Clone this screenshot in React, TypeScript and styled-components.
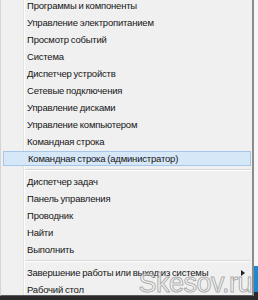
import styled, { createGlobalStyle } from "styled-components";

const GlobalStyle = createGlobalStyle`
  html, body {
    margin: 0;
    padding: 0;
    background: #2a2a2a;
  }
  #root {
    width: 258px;
    height: 300px;
    overflow: hidden;
  }
`;

type Entry = { label: string; active?: boolean; submenu?: boolean } | "sep";

const ENTRIES: Entry[] = [
  { label: "Программы и компоненты" },
  { label: "Управление электропитанием" },
  { label: "Просмотр событий" },
  { label: "Система" },
  { label: "Диспетчер устройств" },
  { label: "Сетевые подключения" },
  { label: "Управление дисками" },
  { label: "Управление компьютером" },
  { label: "Командная строка" },
  { label: "Командная строка (администратор)", active: true },
  "sep",
  { label: "Диспетчер задач" },
  { label: "Панель управления" },
  { label: "Проводник" },
  { label: "Найти" },
  { label: "Выполнить" },
  "sep",
  { label: "Завершение работы или выход из системы", submenu: true },
  { label: "Рабочий стол" },
];

const Screen = styled.div`
  display: grid;
  grid-template-columns: 254px 4px;
  grid-template-rows: 296px 4px;
  width: 258px;
  height: 300px;
`;

const Menu = styled.div`
  position: relative;
  overflow: hidden;
  box-sizing: border-box;
  border-left: 1px solid #d4d4d4;
  border-right: 2px solid #8c8c8c;
  border-bottom: 1px solid #5a5a5a;
  background: linear-gradient(
    to right,
    #f0f0f0 22px,
    #e2e3e3 22px,
    #e2e3e3 23px,
    #ffffff 23px,
    #ffffff 24px,
    #f0f0f0 24px
  );
  font-family: "Liberation Sans", Arial, sans-serif;
  font-size: 9.5px;
  letter-spacing: -0.2px;
  word-spacing: -0.5px;
  color: #161616;
`;

const List = styled.div`
  display: flex;
  flex-direction: column;
  margin-top: -3px;
`;

const Item = styled.div<{ $active?: boolean }>`
  display: flex;
  align-items: center;
  height: 17px;
  box-sizing: border-box;
  padding-left: 26px;
  padding-right: 7px;
  white-space: nowrap;
  ${(p) =>
    p.$active &&
    `
    height: 15px;
    margin: 1px 1px 1px 2px;
    padding-left: 24px;
    background: #d6e7f8;
    border: 1px solid #a6c7ea;
  `}
`;

const Arrow = styled.span`
  margin-left: auto;
  width: 0;
  height: 0;
  border-top: 3px solid transparent;
  border-bottom: 3px solid transparent;
  border-left: 4px solid #222;
`;

const Separator = styled.div`
  height: 6px;
  display: flex;
  align-items: center;
  padding-left: 24px;
  padding-right: 2px;

  &::after {
    content: "";
    flex: 1;
    height: 1px;
    background: #d7d7d7;
    border-bottom: 1px solid #fff;
  }
`;

const Watermark = styled.span`
  position: absolute;
  right: 0;
  bottom: -4px;
  font-family: "Liberation Sans", Arial, sans-serif;
  font-size: 27px;
  letter-spacing: -0.5px;
  word-spacing: 0;
  color: rgba(255, 255, 255, 0.55);
  -webkit-text-stroke: 1px rgba(110, 110, 110, 0.55);
  pointer-events: none;
`;

const EdgeStrip = styled.div`
  background: linear-gradient(to bottom, #f7f7f7 266px, #1f86cf 266px, #1f86cf 292px, #2a2a2a 292px);
`;

const BottomStrip = styled.div`
  grid-column: 1 / span 2;
  background: #2b2b2b;
`;

export default function App() {
  return (
    <>
      <GlobalStyle />
      <Screen>
        <Menu>
          <List>
            {ENTRIES.map((e, i) =>
              e === "sep" ? (
                <Separator key={i} />
              ) : (
                <Item key={i} $active={e.active}>
                  {e.label}
                  {e.submenu && <Arrow />}
                </Item>
              )
            )}
          </List>
          <Watermark>Skesov.ru</Watermark>
        </Menu>
        <EdgeStrip />
        <BottomStrip />
      </Screen>
    </>
  );
}
